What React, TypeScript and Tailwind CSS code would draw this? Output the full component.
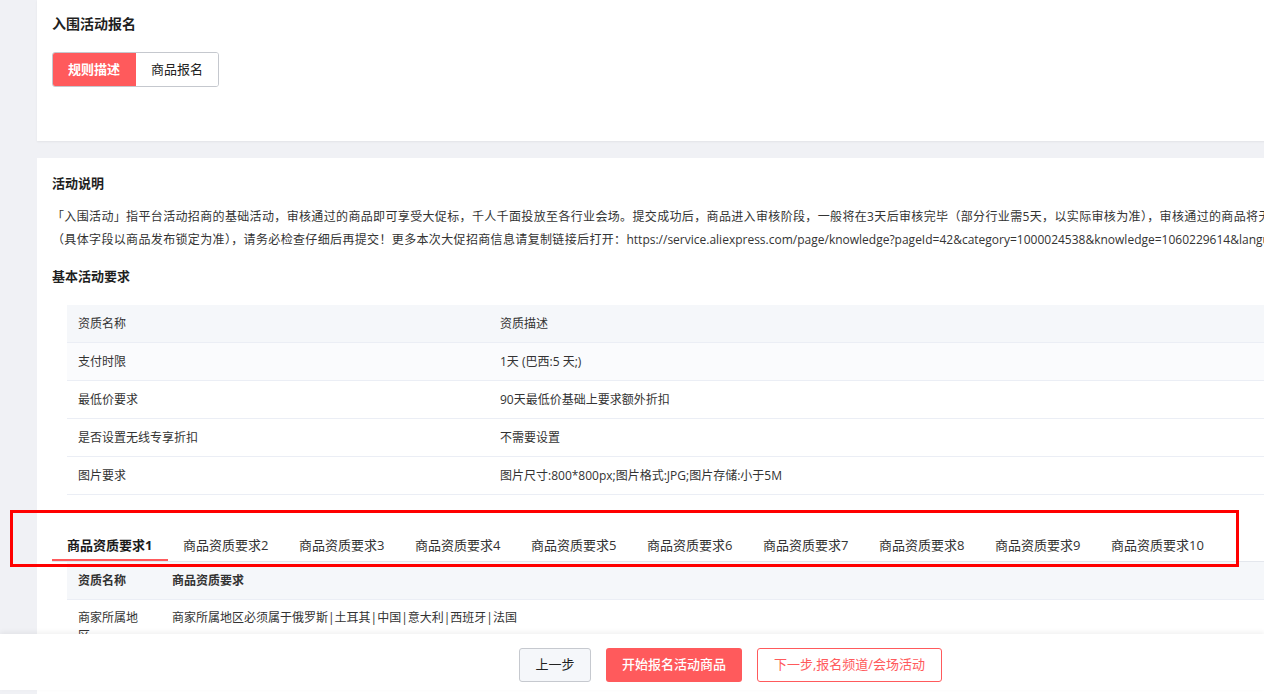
import React from "react";

const RED = "bg-[#ff5a5c]";

const basicRows: [string, string][] = [
  ["支付时限", "1天 (巴西:5 天;)"],
  ["最低价要求", "90天最低价基础上要求额外折扣"],
  ["是否设置无线专享折扣", "不需要设置"],
  ["图片要求", "图片尺寸:800*800px;图片格式:JPG;图片存储:小于5M"],
];

const tabs = Array.from({ length: 10 }, (_, i) => `商品资质要求${i + 1}`);

export default function App() {
  return (
    <div
      className="relative h-[694px] w-[1264px] overflow-hidden bg-[#f0f1f5] text-[#333333]"
      style={{ fontFamily: '"Open Sans", "Noto Sans CJK SC", sans-serif' }}
    >
      <div className="w-[1500px] pl-[37px]">
        {/* Card 1 */}
        <div className="bg-white px-[15px] pt-[14px] pb-[54px] shadow-[0_1px_2px_rgba(0,0,0,0.06)]">
          <div className="text-[14px] font-bold leading-[20px] text-[#1f1f1f]">入围活动报名</div>
          <div className="mt-[18px] flex h-[35px] w-[167px] overflow-hidden rounded-[3px] border border-[#c5c8ce] text-[13px]">
            <div className={`flex w-[84px] items-center justify-center ${RED} font-bold text-white -my-px -ml-px`}>
              规则描述
            </div>
            <div className="flex flex-1 items-center justify-center bg-white text-[#222]">商品报名</div>
          </div>
        </div>

        {/* Card 2 */}
        <div className="mt-[17px] h-[700px] bg-white px-[15px] pt-[15px]">
          <div className="text-[13px] font-bold leading-[20px] text-[#1f1f1f]">活动说明</div>
          <div className="mt-[12px] text-[12px] leading-[23px] tracking-[0.35px] text-[#333]">
            <div className="whitespace-nowrap">
              「入围活动」指平台活动招商的基础活动，审核通过的商品即可享受大促标，千人千面投放至各行业会场。提交成功后，商品进入审核阶段，一般将在3天后审核完毕（部分行业需5天，以实际审核为准），审核通过的商品将无法修改商品信息
            </div>
            <div className="whitespace-nowrap">
              （具体字段以商品发布锁定为准），请务必检查仔细后再提交！更多本次大促招商信息请复制链接后打开：
              <span className="tracking-normal">
                https://service.aliexpress.com/page/knowledge?pageId=42&amp;category=1000024538&amp;knowledge=1060229614&amp;language=zh
              </span>
            </div>
          </div>
          <div className="mt-[15px] text-[13px] font-bold leading-[20px] text-[#1f1f1f]">基本活动要求</div>

          {/* Table 1 */}
          <div className="ml-[15px] mt-[19px] text-[12px] text-[#333]">
            <div className="grid h-[38px] grid-cols-[422px_1fr] items-center border-b border-[#ebeef5] bg-[#f5f7fa]">
              <div className="px-[11px]">资质名称</div>
              <div className="px-[11px]">资质描述</div>
            </div>
            {basicRows.map(([a, b], i) => (
              <div
                key={a}
                className={`grid h-[38px] grid-cols-[422px_1fr] items-center border-b border-[#ebeef5] ${
                  i === 0 ? "bg-[#fafbfd]" : "bg-white"
                }`}
              >
                <div className="px-[11px]">{a}</div>
                <div className="px-[11px]">{b}</div>
              </div>
            ))}
          </div>

          {/* Tabs */}
          <div className="mt-[34px] flex border-b border-[#e4e7ed]">
            {tabs.map((t, i) => (
              <div
                key={t}
                className={`relative h-[32px] whitespace-nowrap px-[15px] text-[13px] leading-[32px] ${
                  i === 0 ? "font-bold text-[#1a1a1a]" : "text-[#333]"
                }`}
              >
                <span className="inline-block min-w-[86px]">{t}</span>
                {i === 0 && <div className={`absolute bottom-0 left-0 right-0 h-[2px] ${RED}`} />}
              </div>
            ))}
          </div>

          {/* Table 2 */}
          <div className="ml-[15px] text-[12px] text-[#333]">
            <div className="flex h-[38px] items-center border-b border-[#ebeef5] bg-[#f5f7fa] font-semibold">
              <div className="w-[94px] shrink-0 px-[11px]">资质名称</div>
              <div className="px-[11px]">商品资质要求</div>
            </div>
            <div className="flex pt-[9px] leading-[18px]">
              <div className="w-[94px] shrink-0 pl-[11px] pr-[13px]">商家所属地区</div>
              <div className="px-[11px]">商家所属地区必须属于俄罗斯|土耳其|中国|意大利|西班牙|法国</div>
            </div>
          </div>
        </div>
      </div>

      {/* Annotation box */}
      <div className="pointer-events-none absolute left-[10px] top-[510px] h-[57px] w-[1229px] border-[3px] border-[#ff0000]" />

      {/* Footer */}
      <div className="absolute bottom-[4px] left-0 right-0 flex h-[56px] items-start gap-[15px] bg-white pl-[519px] pt-[14px] text-[13px] shadow-[0_-2px_5px_rgba(0,0,0,0.06)]">
        <div className="flex h-[34px] w-[72px] items-center justify-center rounded-[3px] border border-[#c6c9cf] bg-[#f5f7fa] text-[#222]">
          上一步
        </div>
        <div className={`flex h-[34px] w-[136px] items-center justify-center rounded-[3px] ${RED} font-medium text-white`}>
          开始报名活动商品
        </div>
        <div className="flex h-[34px] w-[185px] items-center justify-center rounded-[3px] border border-[#ff5a5c] bg-white text-[#ff5a5c]">
          下一步,报名频道/会场活动
        </div>
      </div>
    </div>
  );
}
